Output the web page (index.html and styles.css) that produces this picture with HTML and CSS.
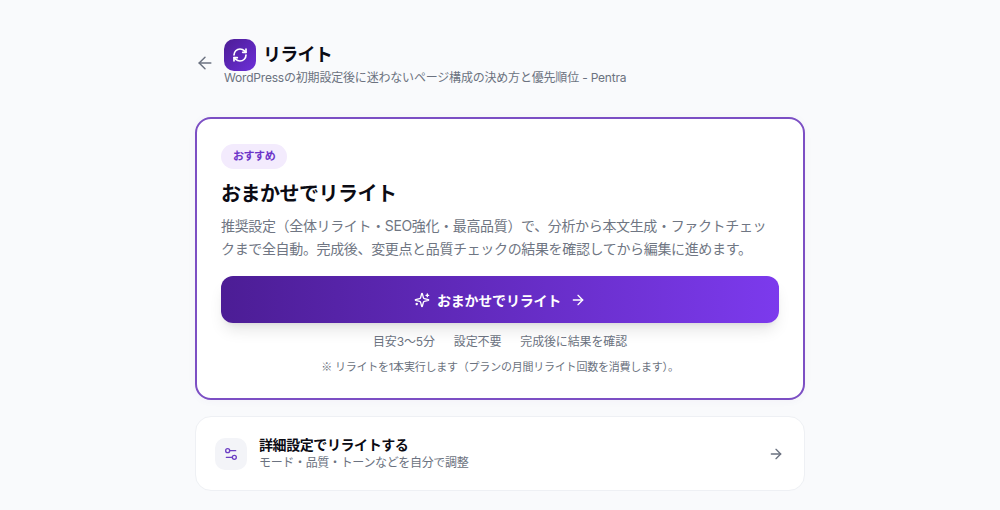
FILE: index.html
```html
<!DOCTYPE html>
<html lang="ja">
<head>
<meta charset="utf-8">
<title>リライト</title>
<link rel="stylesheet" href="styles.css">
</head>
<body>
<main class="page">
  <header class="head">
    <button class="back" aria-label="戻る">
      <svg width="20" height="20" viewBox="0 0 24 24" fill="none" stroke="currentColor" stroke-width="1.75" stroke-linecap="round" stroke-linejoin="round"><path d="m12 19-7-7 7-7"/><path d="M19 12H5"/></svg>
    </button>
    <div class="head-main">
      <div class="head-title">
        <span class="logo">
          <svg width="16" height="16" viewBox="0 0 24 24" fill="none" stroke="currentColor" stroke-width="2.5" stroke-linecap="round" stroke-linejoin="round"><path d="M3 12a9 9 0 0 1 9-9 9.75 9.75 0 0 1 6.74 2.74L21 8"/><path d="M21 3v5h-5"/><path d="M21 12a9 9 0 0 1-9 9 9.75 9.75 0 0 1-6.74-2.74L3 16"/><path d="M8 16H3v5"/></svg>
        </span>
        <h1>リライト</h1>
      </div>
      <p class="sub">WordPressの初期設定後に迷わないページ構成の決め方と優先順位 - Pentra</p>
    </div>
  </header>

  <section class="card">
    <span class="badge">おすすめ</span>
    <h2>おまかせでリライト</h2>
    <p class="desc">推奨設定（全体リライト・SEO強化・最高品質）で、分析から本文生成・ファクトチェックまで全自動。完成後、変更点と品質チェックの結果を確認してから編集に進めます。</p>
    <button class="cta">
      <svg width="16" height="16" viewBox="0 0 24 24" fill="none" stroke="currentColor" stroke-width="2" stroke-linecap="round" stroke-linejoin="round"><path d="M9.937 15.5A2 2 0 0 0 8.5 14.063l-6.135-1.582a.5.5 0 0 1 0-.962L8.5 9.936A2 2 0 0 0 9.937 8.5l1.582-6.135a.5.5 0 0 1 .963 0L14.063 8.5A2 2 0 0 0 15.5 9.937l6.135 1.581a.5.5 0 0 1 0 .964L15.5 14.063a2 2 0 0 0-1.437 1.437l-1.582 6.135a.5.5 0 0 1-.963 0z"/><path d="M20 3v4"/><path d="M22 5h-4"/><path d="M4 17v2"/><path d="M5 18H3"/></svg>
      <span>おまかせでリライト</span>
      <svg class="cta-arrow" width="16" height="16" viewBox="0 0 24 24" fill="none" stroke="currentColor" stroke-width="2" stroke-linecap="round" stroke-linejoin="round"><path d="M5 12h14"/><path d="m12 5 7 7-7 7"/></svg>
    </button>
    <ul class="meta">
      <li>目安3〜5分</li>
      <li>設定不要</li>
      <li>完成後に結果を確認</li>
    </ul>
    <p class="note"><span class="mark">※</span> リライトを1本実行します（プランの月間リライト回数を消費します）。</p>
  </section>

  <a class="detail" href="#">
    <span class="detail-icon">
      <svg width="16" height="16" viewBox="0 0 24 24" fill="none" stroke="currentColor" stroke-width="2" stroke-linecap="round" stroke-linejoin="round"><path d="M14 17H5"/><path d="M19 7h-9"/><circle cx="17" cy="17" r="3"/><circle cx="7" cy="7" r="3"/></svg>
    </span>
    <span class="detail-text">
      <strong>詳細設定でリライトする</strong>
      <small>モード・品質・トーンなどを自分で調整</small>
    </span>
    <svg class="detail-arrow" width="16" height="16" viewBox="0 0 24 24" fill="none" stroke="currentColor" stroke-width="2" stroke-linecap="round" stroke-linejoin="round"><path d="M5 12h14"/><path d="m12 5 7 7-7 7"/></svg>
  </a>
</main>
</body>
</html>
```

FILE: styles.css
```css
* { box-sizing: border-box; }
html, body { margin: 0; padding: 0; height: 100%; overflow: hidden; }
body {
  background: #f9fafc;
  color: #111827;
  font-family: Inter, "Noto Sans CJK JP", sans-serif;
}
.page { width: 610px; margin: 0 auto; padding-top: 39px; }
.head { display: flex; align-items: flex-start; gap: 9px; height: 47px; }
.back { border: 0; background: none; padding: 0; width: 20px; display: flex; color: #6b7280; align-self: center; }
.head-main { display: flex; flex-direction: column; }
.head-title { display: flex; align-items: center; gap: 8px; }
.logo {
  width: 32px; height: 32px; border-radius: 10px;
  display: flex; align-items: center; justify-content: center;
  color: #fff;
  background: linear-gradient(135deg, #4c1d95, #6d2fd9);
}
h1 { margin: 0 0 0 -1px; font-size: 18px; line-height: 28px; font-weight: 700; color: #0b0b14; letter-spacing: -.04em; }
.sub { margin: -1px 0 0; font-size: 12px; line-height: 15px; color: #6b7280; letter-spacing: -.016em; }
.card {
  margin-top: 31px;
  height: 283px;
  background: #fff;
  border: 2px solid #7c4fc4;
  border-radius: 16px;
  padding: 25px 24px 0;
  box-shadow: 0 1px 8px rgba(76,29,149,.04);
}
.badge {
  display: inline-block;
  height: 25px; line-height: 25px;
  padding: 0 12px;
  border-radius: 999px;
  background: #f3ebfd;
  color: #6d35c9;
  font-size: 11px; font-weight: 700;
  letter-spacing: -.04em;
  vertical-align: top;
}
h2 { margin: 11px 0 0; font-size: 20px; line-height: 28px; font-weight: 700; color: #0b0b14; letter-spacing: -.025em; }
.desc { margin: 6px 0 0; font-size: 14px; line-height: 23px; color: #6f7683; letter-spacing: -.025em; }
.cta {
  margin-top: 16px;
  width: 100%; height: 47px;
  border: 0; border-radius: 12px;
  display: flex; align-items: center; justify-content: center; gap: 7px;
  color: #fff;
  font: 700 14px Inter, "Noto Sans CJK JP", sans-serif;
  letter-spacing: -.016em;
  background: linear-gradient(90deg, #4c1d95, #7c3aed);
  box-shadow: 0 10px 15px -3px rgba(0,0,0,.1), 0 4px 6px -4px rgba(0,0,0,.1);
}
.cta-arrow { margin-left: 2px; }
.meta {
  list-style: none; margin: 11px 0 0; padding: 0;
  display: flex; justify-content: center; gap: 19px;
  font-size: 12px; line-height: 16px; color: #6b7280;
  letter-spacing: -.012em;
}
.note { margin: 9px 0 0; text-align: center; font-size: 11px; line-height: 14px; color: #6b7280; letter-spacing: -.02em; }
.mark { font-family: "Noto Sans CJK JP", sans-serif; }
.detail {
  margin-top: 16px;
  height: 75px;
  display: flex; align-items: center; gap: 12px;
  padding: 0 20px 0 19px;
  background: #fff;
  border: 1px solid #eef0f4;
  border-radius: 16px;
  text-decoration: none;
}
.detail-icon {
  width: 32px; height: 32px; border-radius: 10px;
  background: #f3f4f8; color: #6d3fc4;
  display: flex; align-items: center; justify-content: center;
}
.detail-text { flex: 1; display: flex; flex-direction: column; }
.detail-text strong { font-size: 14px; line-height: 18px; margin-top: -1px; font-weight: 700; color: #0b0b14; letter-spacing: -.03em; }
.detail-text small { font-size: 12px; line-height: 16px; margin-top: 1px; color: #6b7280; letter-spacing: -.028em; }
.detail-arrow { color: #6b7280; }
```
